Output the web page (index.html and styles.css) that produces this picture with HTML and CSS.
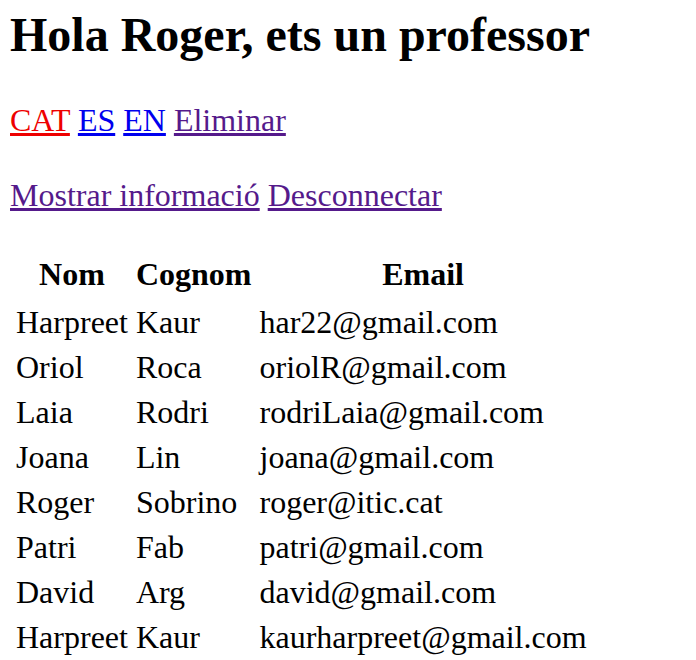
FILE: index.html
```html
<!DOCTYPE html>
<html lang="ca">
<head>
<meta charset="utf-8">
<title>Professor</title>
<link rel="stylesheet" href="styles.css">
</head>
<body>
<h2 class="title">Hola Roger, ets un professor</h2>
<p class="langs"><a href="#" class="active">CAT</a> <a href="#" class="lang">ES</a> <a href="#" class="lang">EN</a> <a href="#" class="visited">Eliminar</a></p>
<p class="actions"><a href="#" class="visited">Mostrar informació</a> <a href="#" class="visited">Desconnectar</a></p>
<table class="users">
<thead>
<tr><th>Nom</th><th>Cognom</th><th>Email</th></tr>
</thead>
<tbody>
<tr><td>Harpreet</td><td>Kaur</td><td>har22@gmail.com</td></tr>
<tr><td>Oriol</td><td>Roca</td><td>oriolR@gmail.com</td></tr>
<tr><td>Laia</td><td>Rodri</td><td>rodriLaia@gmail.com</td></tr>
<tr><td>Joana</td><td>Lin</td><td>joana@gmail.com</td></tr>
<tr><td>Roger</td><td>Sobrino</td><td>roger@itic.cat</td></tr>
<tr><td>Patri</td><td>Fab</td><td>patri@gmail.com</td></tr>
<tr><td>David</td><td>Arg</td><td>david@gmail.com</td></tr>
<tr><td>Harpreet</td><td>Kaur</td><td>kaurharpreet@gmail.com</td></tr>
</tbody>
</table>
</body>
</html>
```
FILE: styles.css
```css
html, body {
  background: #fff;
}
body {
  margin: 0;
  padding: 0 0 0 10px;
  font-family: "Liberation Serif", "Times New Roman", serif;
  font-size: 32px;
  color: #000;
}
.title {
  font-size: 48px;
  font-weight: bold;
  margin: 7px 0 40px 0;
}
.langs {
  margin: 0 0 38px 0;
}
.actions {
  margin: 0;
}
a {
  text-decoration: underline;
}
a.active {
  color: #ee0000;
}
a.lang {
  color: #0000ee;
}
a.visited {
  color: #551a8b;
}
.users {
  margin-top: 36px;
  border-collapse: separate;
  border-spacing: 4px;
}
.users th {
  padding: 2px 2px 5px 2px;
  font-weight: bold;
  text-align: center;
}
.users td {
  padding: 2px;
  text-align: left;
}
```
